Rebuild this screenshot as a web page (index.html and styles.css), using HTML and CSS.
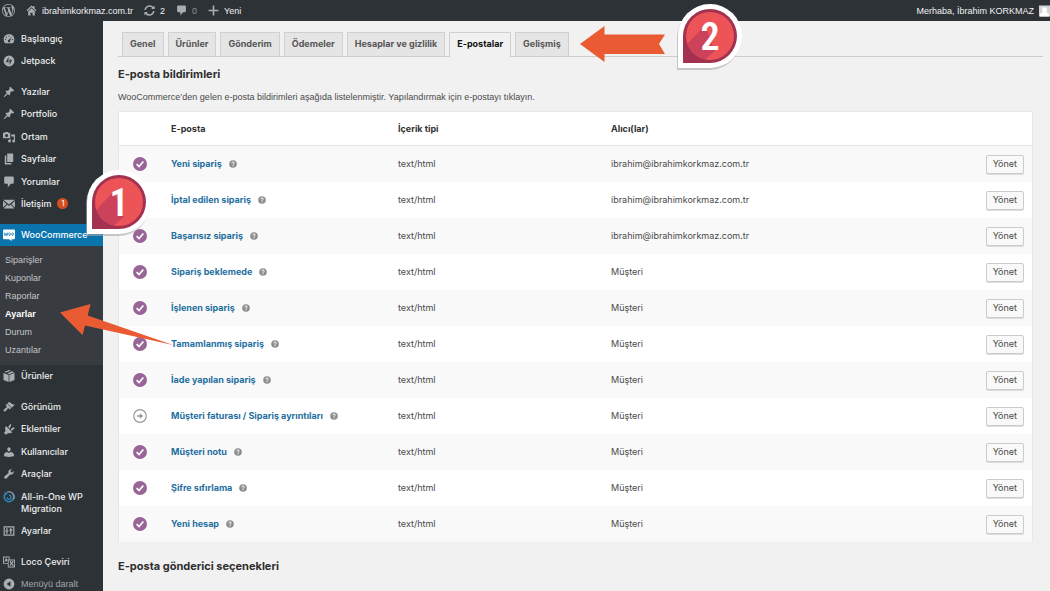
FILE: index.html
```html
<!DOCTYPE html>
<html lang="tr">
<head>
<meta charset="utf-8">
<meta name="viewport" content="width=device-width, initial-scale=1">
<title>WooCommerce – E-postalar</title>
<link rel="stylesheet" href="styles.css">
</head>
<body>
<svg class="sprite" aria-hidden="true">
  <symbol id="wp" viewBox="0 0 20 20"><path d="M20 10c0-5.51-4.49-10-10-10C4.48 0 0 4.49 0 10c0 5.52 4.48 10 10 10 5.51 0 10-4.48 10-10zM7.78 15.37L4.37 6.22c.55-.02 1.17-.08 1.17-.08.5-.06.44-1.13-.06-1.11 0 0-1.45.11-2.37.11-.18 0-.37 0-.58-.01C4.12 2.69 6.87 1.11 10 1.11c2.33 0 4.45.87 6.05 2.34-.68-.11-1.65.39-1.65 1.58 0 .74.45 1.36.9 2.1.35.61.55 1.36.55 2.46 0 1.49-1.4 5-1.4 5l-3.03-8.37c.54-.02.82-.17.82-.17.5-.05.44-1.25-.06-1.22 0 0-1.44.12-2.38.12-.87 0-2.33-.12-2.33-.12-.5-.03-.56 1.2-.06 1.22l.92.08 1.26 3.41zM17.41 10c.24-.64.74-1.87.43-4.25.7 1.29 1.05 2.71 1.05 4.25 0 3.29-1.73 6.24-4.4 7.78.97-2.59 1.94-5.2 2.92-7.78zM6.1 18.09C3.12 16.65 1.11 13.53 1.11 10c0-1.3.23-2.48.72-3.59C3.25 10.3 4.67 14.2 6.1 18.09zm4.03-6.63l2.58 6.98c-.86.29-1.76.45-2.71.45-.79 0-1.57-.11-2.29-.33.81-2.38 1.62-4.74 2.42-7.1z"/></symbol>
  <symbol id="home" viewBox="0 0 20 20"><path d="M10 1l3 2.800V2h2.500v4.300L19 9.700l-1.400 1.500L10 4.200l-7.600 7L1 9.700zM10 6l6 5.500V19h-4v-5H8v5H4v-7.500z"/></symbol>
  <symbol id="update" viewBox="0 0 20 20"><path d="M10.200 3.300c1.900 0 3.600.8 4.900 2L13 7.400h6.300V1.200l-2.200 2.100A9.600 9.600 0 0 0 .8 9h2.800a6.900 6.900 0 0 1 6.600-5.700zm-.4 13.400c-1.900 0-3.600-.8-4.900-2L7 12.600H.7v6.200l2.200-2.100A9.600 9.600 0 0 0 19.200 11h-2.800a6.900 6.900 0 0 1-6.600 5.700z"/></symbol>
  <symbol id="comment" viewBox="0 0 20 20"><path d="M4 1h12a2 2 0 0 1 2 2v8a2 2 0 0 1-2 2h-3l-5 6v-6H4a2 2 0 0 1-2-2V3a2 2 0 0 1 2-2z"/></symbol>
  <symbol id="plus" viewBox="0 0 20 20"><path d="M8.500 1h3v7.500H19v3h-7.500V19h-3v-7.500H1v-3h7.500z"/></symbol>
  <symbol id="dash" viewBox="0 0 20 20"><path fill-rule="evenodd" d="M3.760 17h12.480A9 9 0 1 0 3.760 17zM10 4a1 1 0 1 1 0 2 1 1 0 0 1 0-2zM5.500 6a1 1 0 1 1 0 2 1 1 0 0 1 0-2zm9 .3l-2.700 6.200a2 2 0 1 1-1.800-1.100zM4 10a1 1 0 1 1 0 2 1 1 0 0 1 0-2zm12 0a1 1 0 1 1 0 2 1 1 0 0 1 0-2z"/></symbol>
  <symbol id="jet" viewBox="0 0 20 20"><path fill-rule="evenodd" d="M10 1a9 9 0 1 1 0 18 9 9 0 0 1 0-18zM9.200 3.500L5 11.500l4.200 1zm1.700 4v9L15 8.500z"/></symbol>
  <symbol id="pin" viewBox="0 0 20 20"><path d="M10.440 3.020l1.820-1.820 6.360 6.350-1.830 1.820c-1.050-.68-2.480-.57-3.410.36l-.75.75c-.92.93-1.040 2.350-.35 3.410l-1.830 1.820-2.410-2.410-2.800 2.790c-.42.42-3.380 2.710-3.800 2.290s1.860-3.390 2.280-3.810l2.790-2.790L4.100 9.360l1.830-1.820c1.050.69 2.480.57 3.400-.36l.75-.75c.93-.92 1.050-2.350.36-3.410z"/></symbol>
  <symbol id="media" viewBox="0 0 20 20"><path fill-rule="evenodd" d="M0 3h3l1-1.500h4L9 3h3v9H0zm6 2a2.500 2.500 0 1 0 0 5 2.500 2.500 0 0 0 0-5zM13.500 6H20v11a2.300 2.300 0 1 1-2-2.300V9h-4.500zM11 13.500h2V17a2.300 2.300 0 1 1-2-2.300z"/></symbol>
  <symbol id="pages" viewBox="0 0 20 20"><path d="M7 1h10v14H7zM3 4h2.500v12.500H14V19H3z"/></symbol>
  <symbol id="mail" viewBox="0 0 20 20"><path d="M0 3h20l-10 8zM0 5l6 5-6 6zm20 0v11l-6-5.500zM7.300 11L10 13.200l2.700-2.200 6.300 6.500H1z"/></symbol>
  <symbol id="woo" viewBox="0 0 20 20"><path fill="#fff" d="M2 1h16a2 2 0 0 1 2 2v12a2 2 0 0 1-2 2h-4l1 3-5-3H2a2 2 0 0 1-2-2V3a2 2 0 0 1 2-2z"/><path fill="none" stroke="#0b74ad" stroke-width="1.300" d="M2 6l1.300 5 1.700-3.500L6.700 11 8 6m3 .5a1.300 2.200 0 1 0 .1 0zm5 0a1.300 2.200 0 1 0 .1 0z"/></symbol>
  <symbol id="box" viewBox="0 0 20 20"><path d="M10 0l3 1.100-8 3.200-3-1.100zm5 2l4 1.600-9 3.300-3-1.100zM.8 5l8.600 3.300V20L.8 16.500zm18.400 0v11.500L10.600 20V8.300z"/></symbol>
  <symbol id="brush" viewBox="0 0 20 20"><path d="M14.480 11.060L7.410 3.990l1.500-1.500c.5-.56 2.300-.47 3.510.32 1.210.8 1.430 1.280 2.910 2.100 1.180.64 2.450 1.260 4.450.85zm-.71.71L6.700 4.700 4.930 6.470c-.39.39-.39 1.020 0 1.410l1.060 1.060c.39.39.39 1.030 0 1.420-.6.600-1.430 1.110-2.210 1.690-.35.26-.7.53-1.010.84C1.430 14.230.4 16.080 1.400 17.070c.99 1 2.840-.03 4.180-1.360.31-.31.58-.66.85-1.020.57-.78 1.080-1.610 1.690-2.210.39-.39 1.020-.39 1.410 0l1.060 1.060c.39.39 1.020.39 1.410 0z"/></symbol>
  <symbol id="plug" viewBox="0 0 20 20"><path d="M5 5l10.500 10.500c-2.200 1.800-5 2-7 1L5 19.500 1.500 16.500 4.500 13C3 10.500 3 7.500 5 5zM8.500 6.500l3.500-5 2 1.500-2.800 6.300zM12.500 10.500l5.300-3.800 1.700 2-4.800 4.300z"/></symbol>
  <symbol id="user" viewBox="0 0 20 20"><path d="M10 9.250c-2.270 0-2.730-3.440-2.730-3.440C7 4.020 7.820 2 9.970 2c2.160 0 2.980 2.020 2.710 3.810 0 0-.41 3.440-2.680 3.440zm0 2.570L12.720 10c2.390 0 5.520 2.330 5.520 4.530v2.490s-4.650 1.130-8.240 1.130c-3.650 0-8.240-1.130-8.240-1.130v-2.490c0-2.250 2.940-4.480 5.470-4.480z"/></symbol>
  <symbol id="tool" viewBox="0 0 20 20"><path d="M16.680 9.770c-1.340 1.340-3.300 1.670-4.950.99l-5.410 6.520c-.99.99-2.590.99-3.580 0s-.99-2.590 0-3.570l6.520-5.420c-.68-1.650-.35-3.610.99-4.950 1.280-1.280 3.120-1.620 4.720-1.060l-2.890 2.890 2.820 2.820 2.860-2.870c.53 1.580.18 3.390-1.080 4.650z"/></symbol>
  <symbol id="migrate" viewBox="0 0 20 20"><path fill="none" stroke="#2f86b8" stroke-width="2.500" d="M4 4.500a8 8 0 1 0 11-.8"/><path fill="none" stroke="#a4a9ad" stroke-width="1.800" d="M7 1.800a8.500 8.500 0 0 1 10.500 12"/><path fill="#2f86b8" d="M2 2l7 .5-4.500 5zM10 6a4.500 4.500 0 1 1-4.500 4.500l2.500.5a2.200 2.200 0 1 0 2-2.500z"/></symbol>
  <symbol id="sliders" viewBox="0 0 20 20"><path fill-rule="evenodd" d="M1 2h18v16H1zm2 2v12h14V4zM5.500 5h2v4H9v2H7.500v4h-2v-4H4V9h1.500zM12 5h2v2.500h1.500v2H14V15h-2V9.500h-1.500v-2H12z"/></symbol>
  <symbol id="loco" viewBox="0 0 20 20"><path fill-rule="evenodd" d="M0 1h11v5h9v13H8v-6H0zm1.500 1.500v9H8V6h1.500V2.500zM9.500 7.500v10h9v-10zM4.500 4h2l1 3-1 3-1-2h-1l-1 2H2zM11 9l1.300-1 2 2.500L16.500 8 18 9l-2.500 3.200L18 16l-1.400 1-2.500-3.200L12 16.500l-1.200-1 2.200-3z"/></symbol>
  <symbol id="collapse" viewBox="0 0 20 20"><path fill-rule="evenodd" d="M10 1a9 9 0 1 1 0 18 9 9 0 0 1 0-18zm2.500 4.500L6 10l6.500 4.500z"/></symbol>
  <symbol id="on" viewBox="0 0 20 20"><circle cx="10" cy="10" r="10" fill="#9b6497"/><path fill="none" stroke="#fff" stroke-width="2.400" d="M5.200 10.200l3.400 3.400 6.200-7.200"/></symbol>
  <symbol id="manual" viewBox="0 0 20 20"><circle cx="10" cy="10" r="9" fill="#fff" stroke="#999" stroke-width="1.700"/><path fill="#999" d="M5.500 8.900h4.200V6l5 4-5 4v-2.900H5.500z"/></symbol>
  <symbol id="help" viewBox="0 0 20 20"><circle cx="10" cy="10" r="9.500" fill="#8d8d8d"/><path fill="none" stroke="#fff" stroke-width="2.400" d="M6.800 8c0-4 6.400-4 6.400-.5 0 2-3.200 2.200-3.200 4.500m0 1.500v2.400"/></symbol>
  <symbol id="marker" viewBox="0 0 68 68">
    <path fill="#a9a9a9" opacity=".6" d="M1 68V34A32 32 0 1 1 35 68z"/>
    <path fill="#fff" d="M2 66V34A32 32 0 1 1 34 66z"/>
    <path fill="#a33150" d="M7 61V34a27 27 0 1 1 27 27z"/>
    <circle cx="34" cy="34" r="24" fill="#ec5458"/>
    <path fill="#cc425a" d="M29 23L11.400 42A24 24 0 0 0 29 57.500L39 49z"/>
  </symbol>
</svg>

<header class="bar">
  <a class="bar-item" href="#" aria-label="WordPress"><svg class="bar-logo"><use href="#wp"/></svg></a>
  <a class="bar-item" href="#"><svg class="bar-icon"><use href="#home"/></svg>ibrahimkorkmaz.com.tr</a>
  <a class="bar-item" href="#"><svg class="bar-icon"><use href="#update"/></svg>2</a>
  <a class="bar-item bar-muted" href="#"><svg class="bar-icon"><use href="#comment"/></svg>0</a>
  <a class="bar-item" href="#"><svg class="bar-icon"><use href="#plus"/></svg>Yeni</a>
  <a class="bar-item bar-account" href="#">Merhaba, İbrahim KORKMAZ<svg class="avatar" viewBox="0 0 12 12"><path fill="#d5d5d5" d="M0 0h12v12H0z"/><path fill="#fff" d="M6 2a2.500 2.700 0 0 1 1.500 5c2 .5 3.500 1.500 3.500 5H1c0-3.500 1.500-4.500 3.500-5A2.500 2.700 0 0 1 6 2z"/></svg></a>
</header>

<div class="layout">
  <nav class="side">
    <ul class="group">
      <li><a href="#"><svg><use href="#dash"/></svg>Başlangıç</a></li>
      <li><a href="#"><svg><use href="#jet"/></svg>Jetpack</a></li>
    </ul>
    <ul class="group">
      <li><a href="#"><svg><use href="#pin"/></svg>Yazılar</a></li>
      <li><a href="#"><svg><use href="#pin"/></svg>Portfolio</a></li>
      <li><a href="#"><svg><use href="#media"/></svg>Ortam</a></li>
      <li><a href="#"><svg><use href="#pages"/></svg>Sayfalar</a></li>
      <li><a href="#"><svg><use href="#comment"/></svg>Yorumlar</a></li>
      <li><a href="#"><svg><use href="#mail"/></svg>İletişim<span class="count">1</span></a></li>
    </ul>
    <ul class="group">
      <li class="current"><a href="#"><svg><use href="#woo"/></svg>WooCommerce</a>
        <ul class="sub">
          <li><a href="#">Siparişler</a></li>
          <li><a href="#">Kuponlar</a></li>
          <li><a href="#">Raporlar</a></li>
          <li><a class="here" href="#">Ayarlar</a></li>
          <li><a href="#">Durum</a></li>
          <li><a href="#">Uzantılar</a></li>
        </ul>
      </li>
      <li><a href="#"><svg><use href="#box"/></svg>Ürünler</a></li>
    </ul>
    <ul class="group">
      <li><a href="#"><svg><use href="#brush"/></svg>Görünüm</a></li>
      <li><a href="#"><svg><use href="#plug"/></svg>Eklentiler</a></li>
      <li><a href="#"><svg><use href="#user"/></svg>Kullanıcılar</a></li>
      <li><a href="#"><svg><use href="#tool"/></svg>Araçlar</a></li>
      <li><a href="#"><svg><use href="#migrate"/></svg>All-in-One WP Migration</a></li>
      <li><a href="#"><svg><use href="#sliders"/></svg>Ayarlar</a></li>
    </ul>
    <ul class="group">
      <li><a href="#"><svg><use href="#loco"/></svg>Loco Çeviri</a></li>
      <li><button class="collapse" type="button"><svg><use href="#collapse"/></svg>Menüyü daralt</button></li>
    </ul>
  </nav>

  <main class="main">
    <nav class="tabs">
      <a href="#">Genel</a><a href="#">Ürünler</a><a href="#">Gönderim</a><a href="#">Ödemeler</a><a href="#">Hesaplar ve gizlilik</a><a class="active" href="#">E-postalar</a><a href="#">Gelişmiş</a>
    </nav>
    <h2>E-posta bildirimleri</h2>
    <p class="intro">WooCommerce’den gelen e-posta bildirimleri aşağıda listelenmiştir. Yapılandırmak için e-postayı tıklayın.</p>
    <table class="mails">
      <thead>
        <tr><th class="c-state"></th><th class="c-name">E-posta</th><th class="c-type">İçerik tipi</th><th>Alıcı(lar)</th><th></th></tr>
      </thead>
      <tbody>
        <tr><td><svg class="state"><use href="#on"/></svg></td><td><a href="#">Yeni sipariş</a><svg class="help"><use href="#help"/></svg></td><td>text/html</td><td>ibrahim@ibrahimkorkmaz.com.tr</td><td class="act"><button type="button">Yönet</button></td></tr>
        <tr><td><svg class="state"><use href="#on"/></svg></td><td><a href="#">İptal edilen sipariş</a><svg class="help"><use href="#help"/></svg></td><td>text/html</td><td>ibrahim@ibrahimkorkmaz.com.tr</td><td class="act"><button type="button">Yönet</button></td></tr>
        <tr><td><svg class="state"><use href="#on"/></svg></td><td><a href="#">Başarısız sipariş</a><svg class="help"><use href="#help"/></svg></td><td>text/html</td><td>ibrahim@ibrahimkorkmaz.com.tr</td><td class="act"><button type="button">Yönet</button></td></tr>
        <tr><td><svg class="state"><use href="#on"/></svg></td><td><a href="#">Sipariş beklemede</a><svg class="help"><use href="#help"/></svg></td><td>text/html</td><td>Müşteri</td><td class="act"><button type="button">Yönet</button></td></tr>
        <tr><td><svg class="state"><use href="#on"/></svg></td><td><a href="#">İşlenen sipariş</a><svg class="help"><use href="#help"/></svg></td><td>text/html</td><td>Müşteri</td><td class="act"><button type="button">Yönet</button></td></tr>
        <tr><td><svg class="state"><use href="#on"/></svg></td><td><a href="#">Tamamlanmış sipariş</a><svg class="help"><use href="#help"/></svg></td><td>text/html</td><td>Müşteri</td><td class="act"><button type="button">Yönet</button></td></tr>
        <tr><td><svg class="state"><use href="#on"/></svg></td><td><a href="#">İade yapılan sipariş</a><svg class="help"><use href="#help"/></svg></td><td>text/html</td><td>Müşteri</td><td class="act"><button type="button">Yönet</button></td></tr>
        <tr><td><svg class="state"><use href="#manual"/></svg></td><td><a href="#">Müşteri faturası / Sipariş ayrıntıları</a><svg class="help"><use href="#help"/></svg></td><td>text/html</td><td>Müşteri</td><td class="act"><button type="button">Yönet</button></td></tr>
        <tr><td><svg class="state"><use href="#on"/></svg></td><td><a href="#">Müşteri notu</a><svg class="help"><use href="#help"/></svg></td><td>text/html</td><td>Müşteri</td><td class="act"><button type="button">Yönet</button></td></tr>
        <tr><td><svg class="state"><use href="#on"/></svg></td><td><a href="#">Şifre sıfırlama</a><svg class="help"><use href="#help"/></svg></td><td>text/html</td><td>Müşteri</td><td class="act"><button type="button">Yönet</button></td></tr>
        <tr><td><svg class="state"><use href="#on"/></svg></td><td><a href="#">Yeni hesap</a><svg class="help"><use href="#help"/></svg></td><td>text/html</td><td>Müşteri</td><td class="act"><button type="button">Yönet</button></td></tr>
      </tbody>
    </table>
    <h2 class="next">E-posta gönderici seçenekleri</h2>
  </main>
</div>

<svg class="arrow arrow-menu" viewBox="0 0 114 42"><path d="M0 9.500L30.500 1l-2.800 11.500L113 42 25 22.500 22.500 32z"/></svg>
<svg class="arrow arrow-tab" viewBox="0 0 86 36"><path d="M0 18L24.500 0v8.500H85L79 18l6 10H24.500V36z"/></svg>
<div class="step step-one"><svg><use href="#marker"/></svg><span>1</span></div>
<div class="step step-two"><svg><use href="#marker"/></svg><span>2</span></div>
</body>
</html>
```
FILE: styles.css
```css
* { box-sizing: border-box; }

body {
  margin: 0;
  position: relative;
  min-height: 100vh;
  display: flex;
  flex-direction: column;
  overflow: hidden;
  background: #f1f1f1;
  color: #4a4a4a;
  font: 9px/12px Inter, "Liberation Sans", sans-serif;
}

a { color: inherit; text-decoration: none; }
ul { list-style: none; margin: 0; padding: 0; }
button { font: inherit; }
svg { flex: none; overflow: visible; }
.sprite { position: absolute; width: 0; height: 0; }

.bar, .sub, .collapse, .intro { font-family: "Liberation Sans", Arial, sans-serif; }

/* Top bar */
.bar {
  display: flex;
  align-items: center;
  gap: 11px;
  height: 21px;
  padding-left: 2px;
  background: #2c3236;
  color: #f2f2f2;
  fill: #a9aeb2;
}
.bar-item { display: flex; align-items: center; gap: 5px; white-space: nowrap; }
.bar-logo { width: 13px; height: 13px; }
.bar-icon { width: 11px; height: 11px; }
.bar-muted { color: #8d9296; }
.bar-account { margin-left: auto; }
.avatar { width: 11px; height: 12px; }

/* Side menu */
.layout { display: flex; flex: 1; }
.side {
  display: flex;
  flex-direction: column;
  gap: 8px;
  flex: 0 0 103px;
  padding-top: 7px;
  background: #2c3236;
  color: #eee;
  font-weight: 500;
}
.group > li > a,
.collapse {
  display: flex;
  gap: 6px;
  padding: 5px 8px 5px 3px;
  fill: #a9aeb2;
}
.group svg { width: 12px; height: 12px; }
.group > li:nth-child(even) { padding-bottom: 1px; }
.group > .current > a { background: #0b74ad; color: #fff; }
.collapse {
  width: 100%;
  border: 0;
  background: none;
  color: #a0a5aa;
  text-align: left;
  font-weight: 400;
}
.count {
  width: 11px;
  height: 11px;
  border-radius: 50%;
  background: #d54e21;
  color: #fff;
  font-size: 7px;
  line-height: 11px;
  text-align: center;
}
.sub { padding: 5px 5px 6px; background: #383c41; color: #c2c5c8; font-weight: 400; }
.sub a { display: block; line-height: 18px; }
.sub .here { color: #fff; font-weight: 700; }

/* Content */
.main { flex: 1; min-width: 0; padding: 11px 7px 0 15px; }
.tabs {
  display: flex;
  gap: 4px;
  padding-left: 4px;
  border-bottom: 1px solid #ccc;
}
.tabs a {
  padding: 5px 7px 6px;
  border: 1px solid #d0d0d0;
  border-bottom: 0;
  background: #e5e5e5;
  color: #555;
  font-weight: 700;
}
.tabs .active { margin-bottom: -1px; background: #f1f1f1; color: #111; }

h2 { margin: 9px 0; color: #2e2e2e; font-size: 11px; line-height: 16px; }
.intro { margin: 0 0 8px; }
.next { margin-top: 16px; }

.mails {
  width: calc(100% - 10px);
  border-collapse: separate;
  border-spacing: 0;
  border: 1px solid #e7e7e7;
  border-bottom: 0;
  background: #fff;
}
.mails th {
  height: 34px;
  padding: 0 10px;
  border-bottom: 1px solid #e3e3e3;
  color: #333;
  text-align: left;
}
.mails td { height: 36px; padding: 0 10px; }
.mails td:first-child { padding: 0 14px; }
.mails tbody tr:nth-child(odd) { background: #f9f9f9; }
.mails a { color: #1f6f9f; font-weight: 700; }
.mails .c-state { width: 42px; }
.mails .c-name { width: 227px; }
.mails .c-type { width: 213px; }
.state { display: block; width: 14px; height: 14px; }
.help { width: 8px; height: 8px; margin-left: 7px; vertical-align: -1px; }
.mails .act { padding: 0 8px; text-align: right; }
.act button {
  padding: 2px 6px 3px;
  border: 1px solid #ccc;
  border-radius: 2px;
  background: #f9f9f9;
  box-shadow: 0 1px 0 #ddd;
  color: #4a4a4a;
}

/* Tutorial annotations laid over the screen */
.arrow { position: absolute; fill: #ea5b34; }
.arrow-menu { left: 60px; top: 303px; width: 114px; height: 42px; }
.arrow-tab { left: 580px; top: 26px; width: 86px; height: 36px; }
.step { position: absolute; width: 68px; height: 68px; }
.step svg { position: absolute; inset: 0; width: 100%; height: 100%; }
.step span {
  position: absolute;
  inset: 0;
  color: #fff;
  font: 600 38px/70px "Roboto Condensed", Roboto, sans-serif;
  text-align: center;
}
.step-one { left: 85px; top: 168px; }
.step-two { left: 676px; top: 2px; }
```
